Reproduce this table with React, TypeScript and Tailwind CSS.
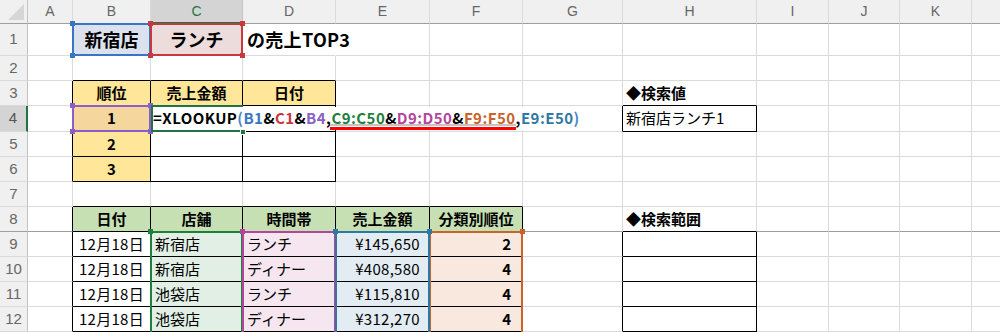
import React from 'react';
import clsx from 'clsx';

const COLS = ['A', 'B', 'C', 'D', 'E', 'F', 'G', 'H', 'I', 'J', 'K', 'L'];
const ROWS = [1, 2, 3, 4, 5, 6, 7, 8, 9, 10, 11, 12];

type Corner = 'tl' | 'tr' | 'bl' | 'br';
type CellData = {
  text?: React.ReactNode;
  cls?: string;
  noRight?: boolean;
  frame?: string;
  handles?: Corner[];
  handleBg?: string;
  active?: boolean;
  formula?: boolean;
};

const cornerPos: Record<Corner, string> = {
  tl: '-left-[3px] -top-[3px]',
  tr: '-right-[3px] -top-[3px]',
  bl: '-left-[3px] -bottom-[3px]',
  br: '-right-[3px] -bottom-[3px]',
};

const yellow = 'justify-center font-bold bg-[#ffe699]';
const green = 'justify-center font-bold bg-[#c6e0b4]';

const sales = [
  { store: '新宿店', time: 'ランチ', amount: '¥145,650', rank: '2' },
  { store: '新宿店', time: 'ディナー', amount: '¥408,580', rank: '4' },
  { store: '池袋店', time: 'ランチ', amount: '¥115,810', rank: '4' },
  { store: '池袋店', time: 'ディナー', amount: '¥312,270', rank: '4' },
];

const DATA: Record<string, CellData> = {
  B1: {
    text: '新宿店',
    cls: 'justify-center text-[18px] font-bold bg-[#dbe2ed]',
    frame: 'z-10 border-2 border-[#3a74c4]',
    handles: ['tl', 'bl'],
    handleBg: 'bg-[#3a74c4]',
  },
  C1: {
    text: 'ランチ',
    cls: 'justify-center text-[18px] font-bold bg-[#ecdcdc]',
    frame: 'z-10 border-2 border-[#c8383f]',
    handles: ['tl', 'tr', 'bl', 'br'],
    handleBg: 'bg-[#c8383f]',
  },
  D1: { text: 'の売上TOP3', cls: 'pl-[4px] text-[18px] font-bold tracking-[0.3px]', noRight: true },
  B3: { text: '順位', cls: yellow },
  C3: { text: '売上金額', cls: yellow },
  D3: { text: '日付', cls: yellow },
  H3: { text: '◆検索値', cls: 'pl-[3px] font-bold' },
  B4: {
    text: '1',
    cls: 'justify-center font-bold bg-[#f5d79e]',
    frame: 'z-10 border-2 border-[#8a5fc6]',
    handles: ['tl', 'tr', 'bl', 'br'],
    handleBg: 'bg-[#8a5fc6]',
  },
  C4: { active: true, formula: true },
  H4: { text: '新宿店ランチ1', cls: 'pl-[3px]' },
  B5: { text: '2', cls: yellow },
  B6: { text: '3', cls: yellow },
  B8: { text: '日付', cls: green },
  C8: { text: '店舗', cls: green },
  D8: { text: '時間帯', cls: green },
  E8: { text: '売上金額', cls: green },
  F8: { text: '分類別順位', cls: green },
  H8: { text: '◆検索範囲', cls: 'pl-[3px] font-bold' },
};

sales.forEach((s, i) => {
  const r = 9 + i;
  const first = i === 0;
  DATA['B' + r] = { text: '12月18日', cls: 'justify-center tracking-[0.3px]' };
  DATA['C' + r] = {
    text: s.store,
    cls: 'pl-[4px] bg-[#e2efe5]',
    frame: first ? 'z-10 border-x-2 border-t-2 border-[#1f7f3c]' : 'z-10 border-x-2 border-[#1f7f3c]',
    handles: first ? ['tl', 'tr'] : [],
    handleBg: 'bg-[#1f7f3c]',
  };
  DATA['D' + r] = {
    text: s.time,
    cls: 'pl-[4px] bg-[#f5e6ef]',
    frame: first ? 'z-10 border-x-2 border-t-2 border-[#b3469a]' : 'z-10 border-x-2 border-[#b3469a]',
    handles: first ? ['tl', 'tr'] : [],
    handleBg: 'bg-[#b3469a]',
  };
  DATA['E' + r] = {
    text: s.amount,
    cls: 'justify-end pr-[9px] bg-[#e3ecf2] tracking-[0.3px]',
    frame: first ? 'z-10 border-x-2 border-t-2 border-[#2e78a6]' : 'z-10 border-x-2 border-[#2e78a6]',
    handles: first ? ['tl', 'tr'] : [],
    handleBg: 'bg-[#2e78a6]',
  };
  DATA['F' + r] = {
    text: s.rank,
    cls: 'justify-end pr-[11px] font-bold bg-[#f8e8dd]',
    frame: first ? 'z-[9] border-x-2 border-t-2 border-[#c8632b]' : 'z-[9] border-x-2 border-[#c8632b]',
    handles: first ? ['tr'] : [],
    handleBg: 'bg-[#c8632b]',
  };
});

function boxed(r: number, c: number) {
  const col = COLS[c];
  if (!col) return false;
  if (r >= 3 && r <= 6 && c >= 1 && c <= 3) return true;
  if (r >= 8 && r <= 12 && c >= 1 && c <= 5) return true;
  if (col === 'H' && (r === 4 || (r >= 9 && r <= 12))) return true;
  return false;
}

function Formula() {
  return (
    <div className="absolute left-[2px] top-px z-30 flex h-[23px] w-[432px] items-center bg-white font-bold tracking-[0.45px]">
      <span className="text-black">=XLOOKUP</span>
      <span className="text-[#4a86c0]">(</span>
      <span className="text-[#3a74c4]">B1</span>
      <span>&amp;</span>
      <span className="text-[#c8383f]">C1</span>
      <span>&amp;</span>
      <span className="text-[#8a5fc6]">B4</span>
      <span>,</span>
      <span className="text-[#1f7f3c]">C9:C50</span>
      <span>&amp;</span>
      <span className="text-[#b3469a]">D9:D50</span>
      <span>&amp;</span>
      <span className="text-[#c8632b]">F9:F50</span>
      <span>,</span>
      <span className="text-[#2e78a6]">E9:E50</span>
      <span className="text-[#4a86c0]">)</span>
      {/* reference hover + error underline */}
      <div className="absolute left-[177px] top-[17px] h-[2px] w-[186px] bg-[#c4c4c4]" />
      <div className="absolute left-[177px] top-[20px] h-[3px] w-[186px] bg-[#ff0000]" />
    </div>
  );
}

function Cell({ r, c }: { r: number; c: number }) {
  const d = DATA[COLS[c] + r] ?? {};
  const right = d.noRight
    ? 'border-r-white'
    : boxed(r, c) || boxed(r, c + 1)
      ? 'border-r-black'
      : 'border-r-[#dadada]';
  const bottom =
    boxed(r, c) || boxed(r + 1, c)
      ? 'border-b-black'
      : r === 8
        ? 'border-b-[#9e9e9e]'
        : 'border-b-[#dadada]';
  return (
    <div
      className={clsx(
        'relative flex items-center whitespace-nowrap border-r border-b',
        right,
        bottom,
        d.cls,
      )}
    >
      {d.text}
      {d.frame && <div className={clsx('pointer-events-none absolute -inset-px', d.frame)} />}
      {d.handles?.map((h) => (
        <span key={h} className={clsx('absolute z-20 h-[5px] w-[5px]', cornerPos[h], d.handleBg)} />
      ))}
      {d.active && (
        <>
          <div className="pointer-events-none absolute -top-px -right-px -bottom-px left-0 z-20 border-2 border-[#217346]" />
          <span className="absolute -right-[4px] -bottom-[4px] z-30 h-[6px] w-[6px] border border-white bg-[#217346]" />
        </>
      )}
      {d.formula && <Formula />}
    </div>
  );
}

export default function App() {
  return (
    <div className="h-[332px] w-[1000px] overflow-hidden bg-white font-['Noto_Sans_CJK_JP',sans-serif] text-[15px] text-black">
      <div className="grid grid-cols-[28px_45px_78px_92px_93px_94px_93px_100px_134px_72px_71px_72px_80px] grid-rows-[24px_32px_25px_25px_26px_25px_25px_25px_25px_25px_25px_25px_25px]">
        {/* corner */}
        <div className="relative border-r border-b border-r-[#c4c4c4] border-b-[#9e9e9e] bg-[#f0f0f0]">
          <svg className="absolute right-[3px] bottom-[3px]" width="16" height="16" viewBox="0 0 16 16">
            <polygon points="16,0 16,16 0,16" fill="#d6d6d6" />
          </svg>
        </div>
        {COLS.map((col) =>
          col === 'C' ? (
            <div
              key={col}
              className="flex items-center justify-center border-r border-b-2 border-r-[#c4c4c4] border-b-[#217346] bg-[#d4d4d4] font-['Liberation_Sans',sans-serif] text-[14px] text-[#217346]"
            >
              {col}
            </div>
          ) : (
            <div
              key={col}
              className="flex items-center justify-center border-r border-b border-r-[#dadada] border-b-[#9e9e9e] bg-[#f0f0f0] font-['Liberation_Sans',sans-serif] text-[14px] text-[#666]"
            >
              {col === 'L' ? '' : col}
            </div>
          ),
        )}
        {ROWS.map((r) => (
          <React.Fragment key={r}>
            {r === 4 ? (
              <div className="flex items-center justify-center border-r-2 border-b border-r-[#217346] border-b-[#dadada] bg-[#d4d4d4] font-['Liberation_Sans',sans-serif] text-[15px] text-[#555]">
                {r}
              </div>
            ) : (
              <div
                className={clsx(
                  "flex items-center justify-center border-r border-b border-r-[#c4c4c4] bg-[#f0f0f0] font-['Liberation_Sans',sans-serif] text-[15px] text-[#666]",
                  r === 8 ? 'border-b-[#9e9e9e]' : 'border-b-[#dadada]',
                )}
              >
                {r}
              </div>
            )}
            {COLS.map((_, c) => (
              <Cell key={c} r={r} c={c} />
            ))}
          </React.Fragment>
        ))}
      </div>
    </div>
  );
}
